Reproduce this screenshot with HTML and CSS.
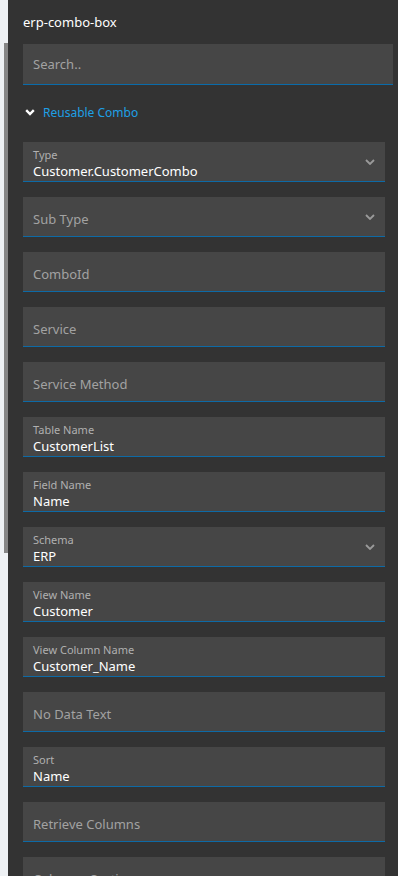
FILE: index.html
```html
<!DOCTYPE html>
<html lang="en">

<head>
    <meta charset="UTF-8">
    <meta name="viewport" content="width=device-width, initial-scale=1.0">
    <title>erp-combo-box</title>
    <link rel="stylesheet" href="styles.css">
</head>

<body>
    <div class="gutter">
        <div class="scroll-thumb"></div>
    </div>
    <aside class="panel">
        <h1 class="panel-title">erp-combo-box</h1>
        <div class="search">
            <input type="text" placeholder="Search..">
        </div>
        <div class="group-head">
            <svg class="group-chevron" width="10" height="7" viewBox="0 0 10 7">
                <path d="M1.2 1.2 L5 5 L8.8 1.2" fill="none" stroke="#ffffff" stroke-width="2.4"/>
            </svg>
            <span>Reusable Combo</span>
        </div>
        <div class="fields">
            <div class="field filled select">
                <label>Type</label>
                <div class="value">Customer.CustomerCombo</div>
                <svg class="caret" width="10" height="6" viewBox="0 0 10 6"><path d="M1 1 L5 5 L9 1" fill="none" stroke="#9a9a9a" stroke-width="1.8"/></svg>
            </div>
            <div class="field select">
                <div class="placeholder">Sub Type</div>
                <svg class="caret" width="10" height="6" viewBox="0 0 10 6"><path d="M1 1 L5 5 L9 1" fill="none" stroke="#9a9a9a" stroke-width="1.8"/></svg>
            </div>
            <div class="field"><div class="placeholder">ComboId</div></div>
            <div class="field"><div class="placeholder">Service</div></div>
            <div class="field"><div class="placeholder">Service Method</div></div>
            <div class="field filled">
                <label>Table Name</label>
                <div class="value">CustomerList</div>
            </div>
            <div class="field filled">
                <label>Field Name</label>
                <div class="value">Name</div>
            </div>
            <div class="field filled select">
                <label>Schema</label>
                <div class="value">ERP</div>
                <svg class="caret" width="10" height="6" viewBox="0 0 10 6"><path d="M1 1 L5 5 L9 1" fill="none" stroke="#9a9a9a" stroke-width="1.8"/></svg>
            </div>
            <div class="field filled">
                <label>View Name</label>
                <div class="value">Customer</div>
            </div>
            <div class="field filled">
                <label>View Column Name</label>
                <div class="value">Customer_Name</div>
            </div>
            <div class="field"><div class="placeholder">No Data Text</div></div>
            <div class="field filled">
                <label>Sort</label>
                <div class="value">Name</div>
            </div>
            <div class="field"><div class="placeholder">Retrieve Columns</div></div>
            <div class="field"><div class="placeholder">Columns Sorting</div></div>
        </div>
    </aside>
</body>

</html>
```

FILE: styles.css
```css
html, body {
    margin: 0;
    padding: 0;
    height: 100%;
    overflow: hidden;
}

body {
    display: flex;
    background-color: #eef1f4;
    font-family: "Noto Sans", "Open Sans", sans-serif;
    color: #ffffff;
}

.gutter {
    width: 8px;
    flex: none;
    padding-top: 43px;
    box-sizing: border-box;
}

.scroll-thumb {
    margin-left: 4px;
    width: 4px;
    height: 510px;
    background-color: #868686;
}

.panel {
    flex: 1;
    background-color: #333333;
    padding: 0 5px 0 15px;
    box-sizing: border-box;
}

.panel-title {
    margin: 0;
    padding-top: 14px;
    height: 44px;
    font-size: 13px;
    font-weight: 400;
    line-height: 16px;
    box-sizing: border-box;
}

.search {
    height: 41px;
    background-color: #464646;
    border-bottom: 1px solid #0a6cab;
    box-sizing: border-box;
}

.search input {
    width: 100%;
    height: 40px;
    border: 0;
    background: transparent;
    padding: 0 10px;
    box-sizing: border-box;
    font-family: inherit;
    font-size: 13px;
    color: #ffffff;
    outline: none;
}

.search input::placeholder {
    color: #a2a2a2;
}

.group-head {
    display: flex;
    align-items: center;
    height: 55px;
    padding-left: 2px;
    font-size: 12px;
    color: #1ea0e6;
}

.group-chevron {
    margin-right: 8px;
}

.fields {
    display: flex;
    flex-direction: column;
    gap: 15px;
    margin-right: 8px;
    margin-top: 2px;
}

.field {
    position: relative;
    height: 40px;
    background-color: #464646;
    border-bottom: 1px solid #0d6aa6;
    box-sizing: border-box;
    padding: 0 10px;
    display: flex;
    flex-direction: column;
    justify-content: center;
}

.field.filled {
    justify-content: flex-start;
    padding-top: 6px;
}

.field label {
    font-size: 11px;
    line-height: 14px;
    color: #b0b0b0;
}

.field .value {
    margin-top: 1px;
    font-size: 13px;
    line-height: 17px;
    color: #ffffff;
}

.field .placeholder {
    font-size: 13px;
    color: #a2a2a2;
    padding-top: 4px;
}

.caret {
    position: absolute;
    right: 10px;
    top: 17px;
}
```
